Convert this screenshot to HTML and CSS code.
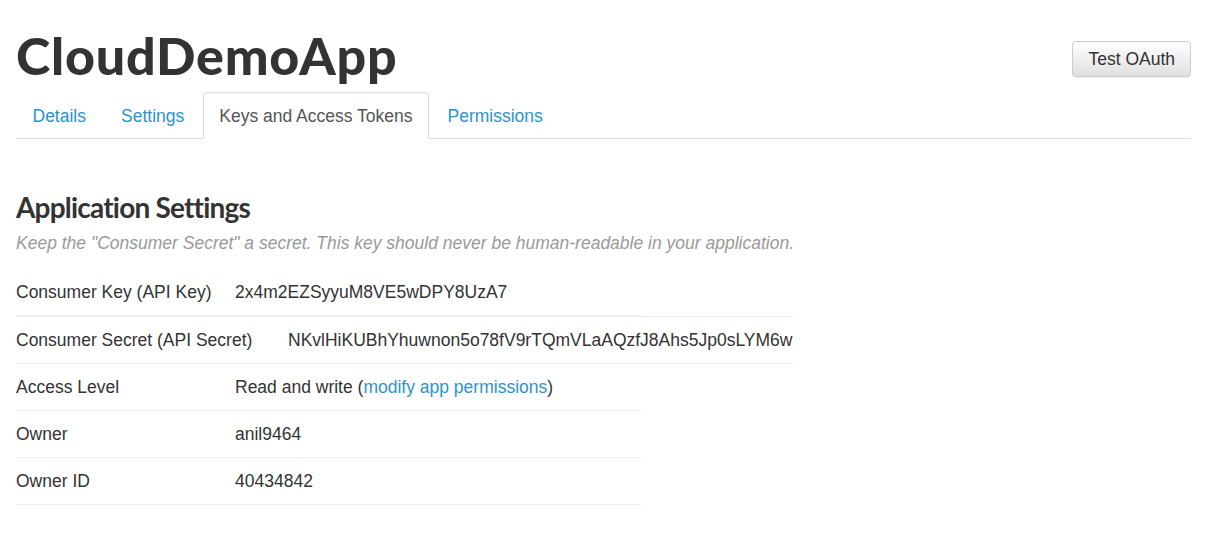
FILE: index.html
```html
<!DOCTYPE html>
<html lang="en">
<head>
<meta charset="utf-8">
<title>CloudDemoApp</title>
<link rel="stylesheet" href="styles.css">
</head>
<body>
<div class="page">
  <header class="app-header">
    <h1 class="app-title">CloudDemoApp</h1>
    <button class="btn" type="button">Test OAuth</button>
  </header>
  <ul class="tabs">
    <li><a href="#">Details</a></li>
    <li><a href="#">Settings</a></li>
    <li class="active"><a href="#">Keys and Access Tokens</a></li>
    <li><a href="#">Permissions</a></li>
  </ul>
  <section class="settings">
    <h2 class="section-title">Application Settings</h2>
    <p class="hint">Keep the "Consumer Secret" a secret. This key should never be human-readable in your application.</p>
    <div class="rows">
      <div class="row first"><div class="label">Consumer Key (API Key)</div><div class="value">2x4m2EZSyyuM8VE5wDPY8UzA7</div></div>
    </div>
    <div class="rows wide">
      <div class="row"><div class="label">Consumer Secret (API Secret)</div><div class="value">NKvlHiKUBhYhuwnon5o78fV9rTQmVLaAQzfJ8Ahs5Jp0sLYM6w</div></div>
    </div>
    <div class="rows">
      <div class="row"><div class="label">Access Level</div><div class="value">Read and write (<a href="#">modify app permissions</a>)</div></div>
      <div class="row"><div class="label">Owner</div><div class="value">anil9464</div></div>
      <div class="row"><div class="label">Owner ID</div><div class="value">40434842</div></div>
    </div>
  </section>
</div>
</body>
</html>
```

FILE: styles.css
```css
* { box-sizing: border-box; }
html, body { margin: 0; padding: 0; background: #fff; }
body {
  font-family: "Liberation Sans", Arial, sans-serif;
  font-size: 17.5px;
  line-height: 22px;
  color: #333;
}
a { color: #2b93cf; text-decoration: none; }

.page { padding: 0 20px 0 16px; }

.app-header {
  display: flex;
  justify-content: space-between;
  align-items: flex-start;
  padding-top: 25px;
}
.app-title {
  margin: 0;
  font-family: Lato, "Liberation Sans", sans-serif;
  font-weight: 900;
  font-size: 52px;
  line-height: 60px;
  color: #333;
  letter-spacing: 0.75px;
}
.btn {
  margin-top: 16px;
  height: 36px;
  padding: 0 15px;
  font-family: "Liberation Sans", Arial, sans-serif;
  font-size: 17.5px;
  color: #333;
  background: linear-gradient(#fff, #e0e0e0);
  border: 1px solid #ccc;
  border-radius: 4px;
  box-shadow: 0 1px 0 rgba(0,0,0,0.06);
}

.tabs {
  display: flex;
  list-style: none;
  margin: 7px 0 0;
  padding: 0;
  border-bottom: 1px solid #ddd;
}
.tabs li { margin-right: 2px; margin-bottom: -1px; }
.tabs a {
  display: block;
  padding: 11px 15.5px 10px;
  line-height: 24px;
  border: 1px solid transparent;
  border-radius: 4px 4px 0 0;
}
.tabs .active a {
  color: #555;
  background: #fff;
  border-color: #ddd #ddd transparent;
}

.settings { padding-top: 50px; }
.section-title {
  margin: 0;
  font-family: Lato, "Liberation Sans", sans-serif;
  font-weight: 700;
  font-size: 28px;
  line-height: 36px;
  color: #333;
  letter-spacing: -0.8px;
}
.hint {
  margin: 7px 0 15px;
  font-style: italic;
  color: #999;
}

.rows { width: 625px; }
.rows.wide { width: max-content; }
.row {
  display: flex;
  padding: 12px 0;
  border-top: 1px solid #eee;
  border-bottom: 1px solid #eee;
  margin-top: -1px;
}
.rows .row.first { border-top-color: transparent; }
.rows.wide .row { margin-top: 0; }
.label { width: 219px; flex: none; }
.rows.wide .label { width: 272px; }
.value { white-space: nowrap; }
```
